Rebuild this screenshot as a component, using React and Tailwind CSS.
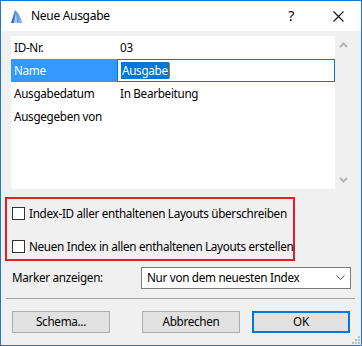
import React from "react";

const font = { fontFamily: '"Noto Sans", "Open Sans", sans-serif' };

function Row({ label, value, selected }) {
  if (selected) {
    return (
      <div className="flex h-[23px] items-center bg-[#3399ff]">
        <div className="w-[106px] pl-[3px] text-white">{label}</div>
        <div className="flex h-[23px] w-[218px] items-center border border-[#0078d7] bg-white pl-[3px]">
          <span className="bg-[#0078d7] px-px leading-[17px] text-white">{value}</span>
          <span className="h-[15px] w-px bg-[#e07000]"></span>
        </div>
      </div>
    );
  }
  return (
    <div className="flex h-[23px] items-center">
      <div className="w-[106px] pl-[3px]">{label}</div>
      <div className="pl-[3px]">{value}</div>
    </div>
  );
}

function Checkbox() {
  return <div className="h-[13px] w-[13px] shrink-0 border border-[#333333] bg-white"></div>;
}

function Button({ children, primary }) {
  return (
    <div
      className={
        "flex h-[22px] w-[98px] items-center justify-center bg-[#e1e1e1] " +
        (primary ? "border-2 border-[#0078d7]" : "border border-[#adadad]")
      }
    >
      {children}
    </div>
  );
}

export default function App() {
  return (
    <div
      className="flex h-[346px] w-[362px] flex-col border border-[#1a78c8] bg-[#f0f0f0] text-[11.7px] tracking-[-0.3px] text-black"
      style={font}
    >
      {/* title bar */}
      <div className="flex h-[30px] items-center bg-white">
        <svg className="ml-[8px]" width="16" height="16" viewBox="0 0 16 16">
          <defs>
            <linearGradient id="g" x1="0" y1="0" x2="1" y2="0">
              <stop offset="0" stopColor="#1f5fd0" />
              <stop offset="1" stopColor="#9cc8f5" />
            </linearGradient>
          </defs>
          <path d="M2 15 L6 2 Q11 6 13.5 15 Z" fill="url(#g)" />
          <path d="M5 15 L7 4 L8 15 Z" fill="#d8eaff" opacity="0.7" />
        </svg>
        <div className="ml-[6px] text-[12px]">Neue Ausgabe</div>
        <div className="ml-auto mr-[39px] text-[14px] leading-none">?</div>
        <svg className="mr-[17px]" width="11" height="11" viewBox="0 0 11 11">
          <path d="M0.5 0.5 L10.5 10.5 M10.5 0.5 L0.5 10.5" stroke="#111" strokeWidth="1.1" />
        </svg>
      </div>

      {/* list */}
      <div className="ml-[10px] mt-[5px] flex h-[153px]">
        <div className="w-[324px] bg-white">
          <Row label="ID-Nr." value="03" />
          <Row label="Name" value="Ausgabe" selected />
          <Row label="Ausgabedatum" value="In Bearbeitung" />
          <Row label="Ausgegeben von" value="" />
        </div>
        <div className="flex w-[17px] flex-col items-center justify-between py-[6px]">
          <svg width="9" height="6" viewBox="0 0 9 6">
            <path d="M1 5 L4.5 1.5 L8 5" fill="none" stroke="#b4b4b4" strokeWidth="2" />
          </svg>
          <svg width="9" height="6" viewBox="0 0 9 6">
            <path d="M1 1 L4.5 4.5 L8 1" fill="none" stroke="#b4b4b4" strokeWidth="2" />
          </svg>
        </div>
      </div>

      {/* red box */}
      <div className="ml-[4px] mt-[8px] flex w-[290px] flex-col gap-[20px] border-2 border-[#ec1c24] pb-[6px] pl-[5px] pt-[8px]">
        <div className="flex h-[13px] items-center whitespace-nowrap">
          <Checkbox />
          <span className="ml-[4px]">Index-ID aller enthaltenen Layouts überschreiben</span>
        </div>
        <div className="flex h-[13px] items-center whitespace-nowrap">
          <Checkbox />
          <span className="ml-[4px]">Neuen Index in allen enthaltenen Layouts erstellen</span>
        </div>
      </div>

      {/* marker row */}
      <div className="mt-[6px] flex items-center">
        <div className="w-[140px] pl-[11px]">Marker anzeigen:</div>
        <div className="flex h-[22px] w-[210px] items-center border border-[#7a7a7a] bg-white pl-[5px]">
          <span>Nur von dem neuesten Index</span>
          <svg className="ml-auto mr-[5px]" width="9" height="6" viewBox="0 0 9 6">
            <path d="M0.5 0.5 L4.5 4.5 L8.5 0.5" fill="none" stroke="#555" strokeWidth="1" />
          </svg>
        </div>
      </div>

      {/* separator */}
      <div className="ml-[5px] mt-[9px] h-px w-[349px] bg-[#a0a0a0]"></div>

      {/* buttons */}
      <div className="ml-[11px] mt-[12px] flex">
        <Button>Schema...</Button>
        <div className="ml-[32px]">
          <Button>Abbrechen</Button>
        </div>
        <div className="ml-[12px]">
          <Button primary>OK</Button>
        </div>
      </div>

      {/* grip */}
      <div className="relative flex-1">
        <svg className="absolute bottom-[1px] right-[1px]" width="8" height="8" viewBox="0 0 8 8">
          <rect x="6" y="0" width="2" height="2" fill="#bcbcbc" />
          <rect x="3" y="3" width="2" height="2" fill="#bcbcbc" />
          <rect x="6" y="3" width="2" height="2" fill="#bcbcbc" />
          <rect x="0" y="6" width="2" height="2" fill="#bcbcbc" />
          <rect x="3" y="6" width="2" height="2" fill="#bcbcbc" />
          <rect x="6" y="6" width="2" height="2" fill="#bcbcbc" />
        </svg>
      </div>
    </div>
  );
}
